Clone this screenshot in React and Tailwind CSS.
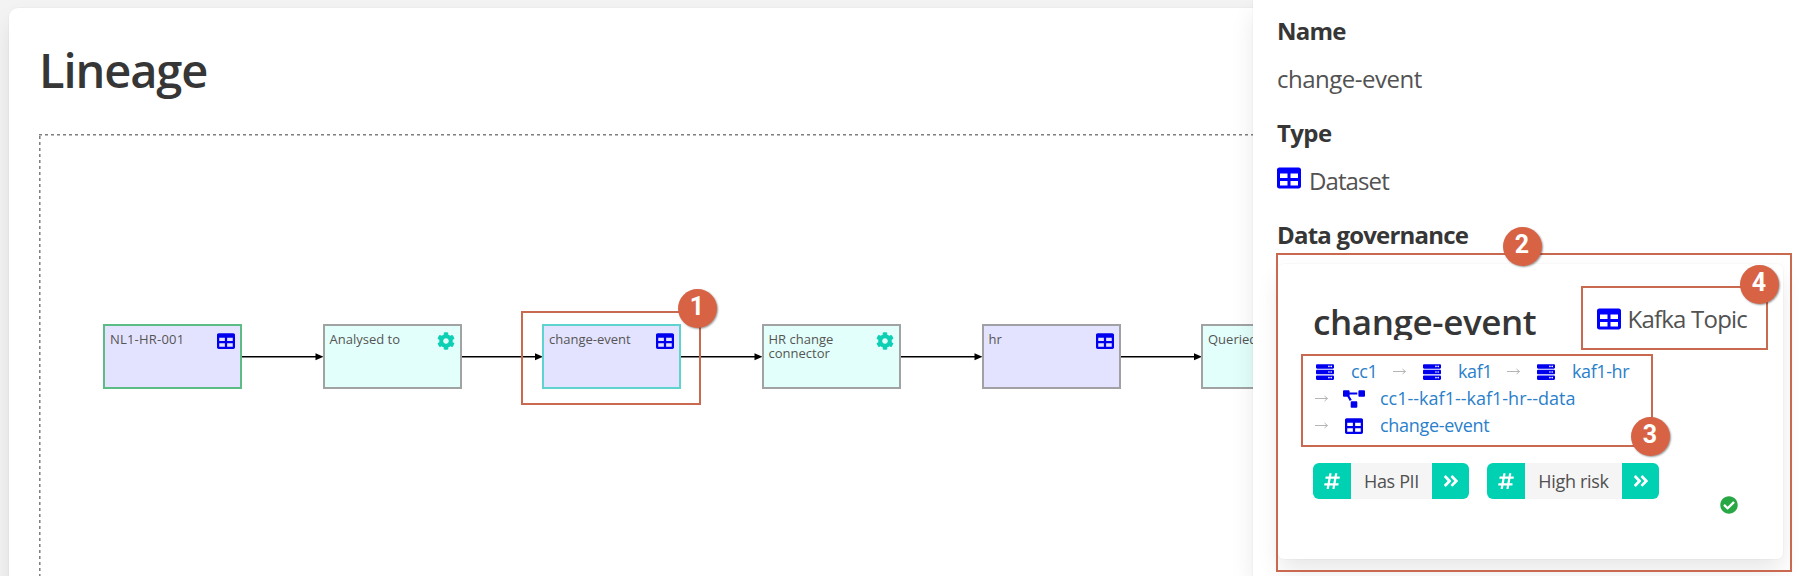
import { FaTable, FaCog, FaServer, FaProjectDiagram, FaCheckCircle, FaHashtag, FaAngleDoubleRight } from "react-icons/fa";

const nodes = [
  { x: 103, label: "NL1-HR-001", kind: "dataset", edge: "border-[#5bbd85]", tracking: "tracking-[0.2px]" },
  { x: 322.5, label: "Analysed to", kind: "process", edge: "border-[#a0a3a2]", tracking: "tracking-[0px]" },
  { x: 542, label: "change-event", kind: "dataset", edge: "border-[#5fd3cd]", tracking: "tracking-[0px]" },
  { x: 761.5, label: "HR change connector", kind: "process", edge: "border-[#a0a3a2]", tracking: "tracking-[0px]" },
  { x: 981.5, label: "hr", kind: "dataset", edge: "border-[#a0a0a5]", tracking: "tracking-[0px]" },
  { x: 1201, label: "Queried by", kind: "process", edge: "border-[#a0a3a2]", tracking: "tracking-[0px]" },
];

function Node({ x, label, kind, edge, tracking }) {
  const dataset = kind === "dataset";
  return (
    <div
      className={`absolute top-[324px] flex h-[65px] w-[139px] items-start justify-between border-2 pt-[6px] pr-[5px] pl-[5px] ${edge} ${dataset ? "bg-[#e4e3ff]" : "bg-[#e3fffb]"}`}
      style={{ left: x }}
    >
      <span className={`w-[100px] text-[13px] leading-[14px] text-[#555] ${tracking}`}>{label}</span>
      {dataset ? <FaTable className="size-[18px] shrink-0 text-[#0000ee]" /> : <FaCog className="size-[18px] shrink-0 text-[#0ccfb4]" />}
    </div>
  );
}

function Badge({ n, place }) {
  return (
    <div className={`absolute z-30 flex size-[39px] items-center justify-center rounded-full bg-[#d86344] pb-[2px] font-['Roboto','Liberation_Sans',sans-serif] text-[25px] font-bold text-white shadow-[1px_1px_2px_rgba(0,0,0,0.4)] ${place}`}>
      {n}
    </div>
  );
}

function Frame({ place }) {
  return <div className={`absolute z-20 border-2 border-[#c96a50] ${place}`} />;
}

function Arrow() {
  return (
    <svg className="h-[9px] w-[13px] shrink-0" viewBox="0 0 13 9" fill="none" stroke="#b5b5b5">
      <path d="M0 4.5H12.5M9.5 2L12.5 4.5L9.5 7" />
    </svg>
  );
}

function Tag({ label, width, tracking }) {
  return (
    <div className="flex h-9 overflow-hidden rounded-md">
      <span className="flex w-[38px] items-center justify-center bg-[#00d1b2] text-white"><FaHashtag className="size-[18px]" /></span>
      <span className={`flex items-center justify-center bg-[#f5f5f5] text-[18px] text-[#505050] ${width} ${tracking}`}>{label}</span>
      <span className="flex w-[37px] items-center justify-center bg-[#00d1b2] text-white"><FaAngleDoubleRight className="size-[18px]" /></span>
    </div>
  );
}

export default function App() {
  return (
    <div className="relative flex h-[576px] w-[1799px] overflow-hidden bg-[#f3f3f3] font-['Open_Sans','Noto_Sans',sans-serif] text-[#525252]">
      <main className="mt-2 ml-[9px] h-[700px] w-[1700px] shrink-0 rounded-[9px] bg-white pt-[30px] pl-[30px] shadow-[0_12px_24px_-2px_rgba(10,10,10,0.1),0_0_0_1px_rgba(10,10,10,0.02)]">
        <h1 className="h-[96px] text-[47px] leading-[64px] font-semibold tracking-[-1.1px] text-[#363636]">Lineage</h1>
        <div className="h-[2px] w-[1600px] bg-[repeating-linear-gradient(90deg,#808080_0_3px,transparent_3px_6px)] mask-[linear-gradient(#000_0_1px,#0008_1px_2px)]" />
        <div className="h-[538px] w-[2px] bg-[repeating-linear-gradient(180deg,#808080_0_3px,transparent_3px_6px)] mask-[linear-gradient(90deg,#000_0_1px,#0008_1px_2px)]" />
      </main>

      <div className="absolute inset-0">
        <svg className="absolute inset-0 h-[576px] w-[1799px]" viewBox="0 0 1799 576">
          {nodes.slice(1).map((n) => (
            <g key={n.x}>
              <path d={`M${n.x - 82} 356.7H${n.x - 4}`} stroke="#000" strokeWidth="1.5" />
              <path d={`M${n.x - 7} 353.2L${n.x + 1} 356.7L${n.x - 7} 360.2Z`} fill="#000" />
            </g>
          ))}
        </svg>
        {nodes.map((n) => <Node key={n.x} {...n} />)}
      </div>

      <aside className="absolute top-0 right-0 z-10 h-[576px] w-[546px] bg-white pt-[13px] pr-4 pl-6 text-[24px] leading-9 shadow-[0_12px_24px_-2px_rgba(10,10,10,0.1),0_0_0_1px_rgba(10,10,10,0.02)]">
        <h2 className="mb-3 font-bold tracking-[-0.8px] text-[#363636]">Name</h2>
        <p className="mb-[18px] tracking-[-0.5px]">change-event</p>
        <h2 className="mb-3 font-bold tracking-[-0.6px] text-[#363636]">Type</h2>
        <p className="mb-[18px] flex items-start gap-2 tracking-[-0.9px]"><FaTable className="mt-[3px] size-6 text-[#0000ff]" />Dataset</p>
        <h2 className="font-bold tracking-[-0.8px] text-[#363636]">Data governance</h2>
        <section className="mt-[11px] ml-[1px] h-[295px] w-[505px] rounded-md bg-white px-9 pt-9 shadow-[0_12px_24px_-2px_rgba(10,10,10,0.1),0_0_0_1px_rgba(10,10,10,0.02)]">
          <header className="flex h-10 items-start justify-between">
            <h3 className="-ml-[1px] h-10 overflow-hidden pt-[2px] text-[35px] leading-10 font-semibold tracking-[-0.4px] text-[#363636]">change-event</h3>
            <p className="flex items-start gap-[7px] pt-[1px] tracking-[-0.8px]"><FaTable className="mt-[6px] size-6 text-[#0000ff]" />Kafka Topic</p>
          </header>
          <nav className="mt-[18px] text-[18px] leading-[27px] text-[#2b7fca]">
            <div className="flex items-center pl-[2px]">
              <FaServer className="mr-[17px] size-[18px] text-[#0000ee]" /><span className="w-[42px] tracking-[-0.4px]">cc1</span>
              <Arrow /><FaServer className="mr-[17px] ml-[17px] size-[18px] text-[#0000ee]" /><span className="w-[49px] tracking-[-0.4px]">kaf1</span>
              <Arrow /><FaServer className="mr-[17px] ml-[17px] size-[18px] text-[#0000ee]" /><span className="tracking-[-0.4px]">kaf1-hr</span>
            </div>
            <div className="flex items-center pl-[1px]">
              <Arrow /><FaProjectDiagram className="mr-[15px] ml-[15px] h-[18px] w-[22px] text-[#0000ee]" /><span>cc1--kaf1--kaf1-hr--data</span>
            </div>
            <div className="flex items-center pl-[1px]">
              <Arrow /><FaTable className="mr-[17px] ml-[17px] size-[18px] text-[#0000ee]" /><span className="tracking-[-0.3px]">change-event</span>
            </div>
          </nav>
          <div className="mt-6 -ml-[1px] flex items-start">
            <div className="flex gap-[18px]">
              <Tag label="Has PII" width="w-[81px]" tracking="tracking-[-0.35px]" />
              <Tag label="High risk" width="w-[97px]" tracking="tracking-[-0.3px]" />
            </div>
            <FaCheckCircle className="mt-[33px] ml-[61px] size-[18px] text-[#28a745]" />
          </div>
        </section>
      </aside>

      <Frame place="left-[521px] top-[311px] h-[94px] w-[180px]" />
      <Frame place="left-[1276px] top-[253px] h-[319px] w-[516px]" />
      <Frame place="left-[1301px] top-[354px] h-[93px] w-[352px]" />
      <Frame place="left-[1581px] top-[286px] h-[64px] w-[187px]" />
      <Badge n="1" place="left-[677.5px] top-[288.5px]" />
      <Badge n="2" place="left-[1502.5px] top-[226.5px]" />
      <Badge n="3" place="left-[1630.5px] top-[416.5px]" />
      <Badge n="4" place="left-[1739.5px] top-[264.5px]" />
    </div>
  );
}
